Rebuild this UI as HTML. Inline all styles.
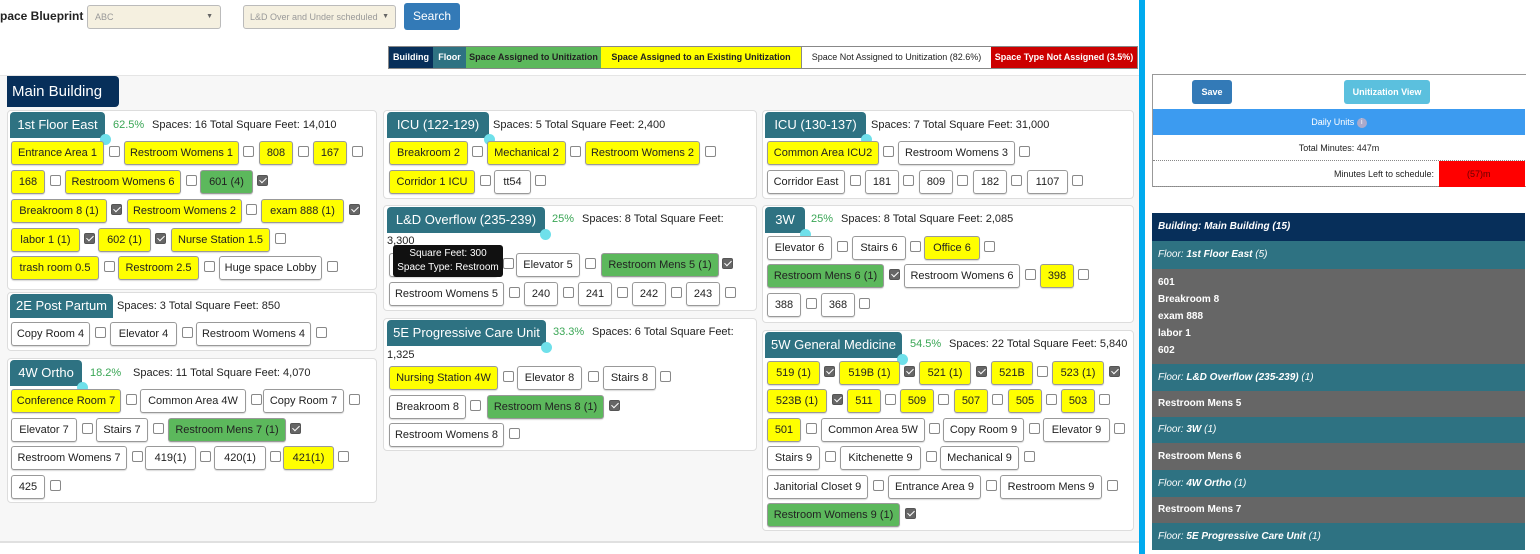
<!DOCTYPE html>
<html><head><meta charset="utf-8"><style>
*{box-sizing:border-box;margin:0;padding:0}
body{width:1540px;height:554px;background:#fff;position:relative;overflow:hidden;font-family:"Liberation Sans",sans-serif;font-size:11px;color:#222}
.a{position:absolute}
.p{position:absolute;background:#fff;border:1px solid #ddd;border-radius:4px}
.t{position:absolute;background:#2e7282;color:#fff;font-size:13px;border-radius:4px 4px 0 0;text-align:center;line-height:26px;height:26px;white-space:nowrap}
.t i{position:absolute;right:-6px;bottom:-7px;width:11px;height:11px;border-radius:50%;background:#6fe0ea}
.k{position:absolute;height:24px;line-height:22px;border:1px solid #999;border-radius:3px;text-align:center;white-space:nowrap;overflow:hidden;font-size:11px;background:#fff;box-shadow:0 1px 1px rgba(0,0,0,.15)}
.y{background:#ffff00}.g{background:#5cb85c}
.b{position:absolute;width:11px;height:11px;border:1px solid #888;border-radius:2px;background:#fff}
.bc{background:#666;border-color:#555}
.bc:after{content:"";position:absolute;left:3px;top:0;width:3px;height:6px;border:solid #fff;border-width:0 1.5px 1.5px 0;transform:rotate(45deg)}
.h{position:absolute;font-size:11px;white-space:nowrap}
.pc{color:#3aa655}
.r{position:absolute;left:1152px;width:373px;color:#fff;font-family:"Liberation Sans",sans-serif;font-size:10px;font-weight:bold;padding-left:6px}
.fl{background:#2e7282;font-style:italic;font-weight:normal}
.gr{background:#666}
.lg span{display:inline-block;text-align:center;height:21px}
</style></head><body>
<div class="a" style="left:0;top:9px;font-weight:bold;font-size:12px">pace Blueprint</div>
<div class="a" style="left:87px;top:5px;width:134px;height:24px;background:#f5f0e0;border:1px solid #bbb;border-radius:3px;color:#999;font-size:9px;line-height:22px;padding-left:7px">ABC<span style="position:absolute;right:7px;color:#666;font-size:7px">▼</span></div>
<div class="a" style="left:243px;top:5px;width:153px;height:24px;background:#f5f0e0;border:1px solid #bbb;border-radius:3px;color:#999;font-size:9px;line-height:22px;padding-left:6px">L&amp;D Over and Under scheduled<span style="position:absolute;right:6px;color:#666;font-size:7px">▼</span></div>
<div class="a" style="left:404px;top:3px;width:56px;height:27px;background:#337ab7;border-radius:3px;color:#fff;font-size:12px;line-height:27px;text-align:center">Search</div>
<div class="a lg" style="left:388px;top:46px;height:23px;display:flex;font-size:9px;font-weight:bold;line-height:21px;border:1px solid #888;white-space:nowrap">
<span style="background:#072f5a;color:#fff;width:44px">Building</span><span style="background:#2e7282;color:#fff;width:33px">Floor</span><span style="background:#5cb85c;width:135px">Space Assigned to Unitization</span><span style="background:#ff0;width:200px">Space Assigned to an Existing Unitization</span><span style="background:#fff;width:190px;font-weight:normal;border-left:1px solid #888">Space Not Assigned to Unitization (82.6%)</span><span style="background:#c00;color:#fff;width:146px">Space Type Not Assigned (3.5%)</span></div>
<div class="a" style="left:1139px;top:0;width:6px;height:554px;background:#00aaee"></div>
<div class="a" style="left:0;top:75px;width:1139px;height:468px;background:#f7f7f7;border-top:1px solid #e5e5e5;border-bottom:2px solid #e0e0e0"></div>
<div class="a" style="left:7px;top:76px;width:112px;height:31px;background:#072f5a;color:#fff;font-size:15px;line-height:31px;padding-left:5px;border-radius:0 4px 4px 0">Main Building</div>

<!-- left col -->
<div class="p" style="left:7px;top:110px;width:370px;height:180px"></div>
<div class="t" style="left:10px;top:112px;width:95px">1st Floor East<i></i></div>
<div class="h pc" style="left:113px;top:119px">62.5%</div><div class="h" style="left:152px;top:119px">Spaces: 16 Total Square Feet: 14,010</div>
<div class="k y" style="left:11px;top:141px;width:93px">Entrance Area 1</div><div class="b" style="left:109px;top:146px"></div>
<div class="k y" style="left:124px;top:141px;width:115px">Restroom Womens 1</div><div class="b" style="left:243px;top:146px"></div>
<div class="k y" style="left:259px;top:141px;width:34px">808</div><div class="b" style="left:298px;top:146px"></div>
<div class="k y" style="left:313px;top:141px;width:34px">167</div><div class="b" style="left:352px;top:146px"></div>
<div class="k y" style="left:11px;top:170px;width:34px">168</div><div class="b" style="left:50px;top:175px"></div>
<div class="k y" style="left:65px;top:170px;width:116px">Restroom Womens 6</div><div class="b" style="left:186px;top:175px"></div>
<div class="k g" style="left:200px;top:170px;width:53px">601 (4)</div><div class="b bc" style="left:257px;top:175px"></div>
<div class="k y" style="left:11px;top:199px;width:96px">Breakroom 8 (1)</div><div class="b bc" style="left:111px;top:204px"></div>
<div class="k y" style="left:127px;top:199px;width:115px">Restroom Womens 2</div><div class="b" style="left:246px;top:204px"></div>
<div class="k y" style="left:261px;top:199px;width:83px">exam 888 (1)</div><div class="b bc" style="left:349px;top:204px"></div>
<div class="k y" style="left:11px;top:228px;width:69px">labor 1 (1)</div><div class="b bc" style="left:84px;top:233px"></div>
<div class="k y" style="left:98px;top:228px;width:53px">602 (1)</div><div class="b bc" style="left:155px;top:233px"></div>
<div class="k y" style="left:171px;top:228px;width:99px">Nurse Station 1.5</div><div class="b" style="left:275px;top:233px"></div>
<div class="k y" style="left:11px;top:256px;width:88px">trash room 0.5</div><div class="b" style="left:104px;top:261px"></div>
<div class="k y" style="left:118px;top:256px;width:81px">Restroom 2.5</div><div class="b" style="left:204px;top:261px"></div>
<div class="k" style="left:219px;top:256px;width:103px">Huge space Lobby</div><div class="b" style="left:327px;top:261px"></div>

<div class="p" style="left:7px;top:292px;width:370px;height:59px"></div>
<div class="t" style="left:10px;top:294px;width:103px;height:24px;line-height:24px">2E Post Partum</div>
<div class="h" style="left:117px;top:300px">Spaces: 3 Total Square Feet: 850</div>
<div class="k" style="left:11px;top:322px;width:79px">Copy Room 4</div><div class="b" style="left:95px;top:327px"></div>
<div class="k" style="left:110px;top:322px;width:67px">Elevator 4</div><div class="b" style="left:182px;top:327px"></div>
<div class="k" style="left:196px;top:322px;width:115px">Restroom Womens 4</div><div class="b" style="left:316px;top:327px"></div>

<div class="p" style="left:7px;top:358px;width:370px;height:145px"></div>
<div class="t" style="left:10px;top:360px;width:72px">4W Ortho<i></i></div>
<div class="h pc" style="left:90px;top:367px">18.2%</div><div class="h" style="left:133px;top:367px">Spaces: 11 Total Square Feet: 4,070</div>
<div class="k y" style="left:11px;top:389px;width:110px">Conference Room 7</div><div class="b" style="left:126px;top:394px"></div>
<div class="k" style="left:140px;top:389px;width:106px">Common Area 4W</div><div class="b" style="left:251px;top:394px"></div>
<div class="k" style="left:263px;top:389px;width:81px">Copy Room 7</div><div class="b" style="left:349px;top:394px"></div>
<div class="k" style="left:11px;top:418px;width:66px">Elevator 7</div><div class="b" style="left:82px;top:423px"></div>
<div class="k" style="left:96px;top:418px;width:52px">Stairs 7</div><div class="b" style="left:153px;top:423px"></div>
<div class="k g" style="left:168px;top:418px;width:118px">Restroom Mens 7 (1)</div><div class="b bc" style="left:290px;top:423px"></div>
<div class="k" style="left:11px;top:446px;width:116px">Restroom Womens 7</div><div class="b" style="left:132px;top:451px"></div>
<div class="k" style="left:145px;top:446px;width:51px">419(1)</div><div class="b" style="left:200px;top:451px"></div>
<div class="k" style="left:214px;top:446px;width:52px">420(1)</div><div class="b" style="left:270px;top:451px"></div>
<div class="k y" style="left:283px;top:446px;width:51px">421(1)</div><div class="b" style="left:338px;top:451px"></div>
<div class="k" style="left:11px;top:475px;width:34px">425</div><div class="b" style="left:50px;top:480px"></div>

<!-- middle col -->
<div class="p" style="left:383px;top:110px;width:374px;height:89px"></div>
<div class="t" style="left:387px;top:112px;width:102px">ICU (122-129)<i></i></div>
<div class="h" style="left:493px;top:119px">Spaces: 5 Total Square Feet: 2,400</div>
<div class="k y" style="left:389px;top:141px;width:79px">Breakroom 2</div><div class="b" style="left:472px;top:146px"></div>
<div class="k y" style="left:487px;top:141px;width:79px">Mechanical 2</div><div class="b" style="left:570px;top:146px"></div>
<div class="k y" style="left:585px;top:141px;width:115px">Restroom Womens 2</div><div class="b" style="left:705px;top:146px"></div>
<div class="k y" style="left:389px;top:170px;width:86px">Corridor 1 ICU</div><div class="b" style="left:480px;top:175px"></div>
<div class="k" style="left:494px;top:170px;width:37px">tt54</div><div class="b" style="left:535px;top:175px"></div>

<div class="p" style="left:383px;top:205px;width:374px;height:106px"></div>
<div class="t" style="left:387px;top:207px;width:158px">L&amp;D Overflow (235-239)<i></i></div>
<div class="h pc" style="left:552px;top:213px">25%</div><div class="h" style="left:582px;top:213px">Spaces: 8 Total Square Feet:</div>
<div class="h" style="left:387px;top:235px">3,300</div>
<div class="k" style="left:389px;top:253px;width:109px">Restroom Mens 5</div><div class="b" style="left:503px;top:258px"></div>
<div class="k" style="left:516px;top:253px;width:64px">Elevator 5</div><div class="b" style="left:585px;top:258px"></div>
<div class="k g" style="left:601px;top:253px;width:118px">Restroom Mens 5 (1)</div><div class="b bc" style="left:722px;top:258px"></div>
<div class="k" style="left:389px;top:282px;width:115px">Restroom Womens 5</div><div class="b" style="left:509px;top:287px"></div>
<div class="k" style="left:524px;top:282px;width:34px">240</div><div class="b" style="left:563px;top:287px"></div>
<div class="k" style="left:578px;top:282px;width:34px">241</div><div class="b" style="left:617px;top:287px"></div>
<div class="k" style="left:632px;top:282px;width:34px">242</div><div class="b" style="left:671px;top:287px"></div>
<div class="k" style="left:686px;top:282px;width:34px">243</div><div class="b" style="left:725px;top:287px"></div>
<div class="a" style="left:393px;top:245px;width:110px;height:32px;background:#111;color:#fff;border-radius:3px;font-size:10px;line-height:14px;text-align:center;padding-top:2px">Square Feet: 300<br>Space Type: Restroom</div>

<div class="p" style="left:383px;top:318px;width:374px;height:133px"></div>
<div class="t" style="left:387px;top:320px;width:159px">5E Progressive Care Unit<i></i></div>
<div class="h pc" style="left:553px;top:326px">33.3%</div><div class="h" style="left:592px;top:326px">Spaces: 6 Total Square Feet:</div>
<div class="h" style="left:387px;top:349px">1,325</div>
<div class="k y" style="left:389px;top:366px;width:109px">Nursing Station 4W</div><div class="b" style="left:503px;top:371px"></div>
<div class="k" style="left:517px;top:366px;width:65px">Elevator 8</div><div class="b" style="left:588px;top:371px"></div>
<div class="k" style="left:603px;top:366px;width:53px">Stairs 8</div><div class="b" style="left:660px;top:371px"></div>
<div class="k" style="left:389px;top:395px;width:77px">Breakroom 8</div><div class="b" style="left:470px;top:400px"></div>
<div class="k g" style="left:487px;top:395px;width:117px">Restroom Mens 8 (1)</div><div class="b bc" style="left:609px;top:400px"></div>
<div class="k" style="left:389px;top:423px;width:115px">Restroom Womens 8</div><div class="b" style="left:509px;top:428px"></div>

<!-- right col -->
<div class="p" style="left:762px;top:110px;width:372px;height:89px"></div>
<div class="t" style="left:765px;top:112px;width:101px">ICU (130-137)<i></i></div>
<div class="h" style="left:871px;top:119px">Spaces: 7 Total Square Feet: 31,000</div>
<div class="k y" style="left:767px;top:141px;width:112px">Common Area ICU2</div><div class="b" style="left:883px;top:146px"></div>
<div class="k" style="left:898px;top:141px;width:117px">Restroom Womens 3</div><div class="b" style="left:1019px;top:146px"></div>
<div class="k" style="left:767px;top:170px;width:78px">Corridor East</div><div class="b" style="left:850px;top:175px"></div>
<div class="k" style="left:865px;top:170px;width:34px">181</div><div class="b" style="left:903px;top:175px"></div>
<div class="k" style="left:919px;top:170px;width:34px">809</div><div class="b" style="left:957px;top:175px"></div>
<div class="k" style="left:973px;top:170px;width:34px">182</div><div class="b" style="left:1011px;top:175px"></div>
<div class="k" style="left:1027px;top:170px;width:41px">1107</div><div class="b" style="left:1072px;top:175px"></div>

<div class="p" style="left:762px;top:205px;width:372px;height:118px"></div>
<div class="t" style="left:765px;top:207px;width:40px">3W<i></i></div>
<div class="h pc" style="left:811px;top:213px">25%</div><div class="h" style="left:841px;top:213px">Spaces: 8 Total Square Feet: 2,085</div>
<div class="k" style="left:767px;top:236px;width:65px">Elevator 6</div><div class="b" style="left:837px;top:241px"></div>
<div class="k" style="left:852px;top:236px;width:54px">Stairs 6</div><div class="b" style="left:910px;top:241px"></div>
<div class="k y" style="left:924px;top:236px;width:56px">Office 6</div><div class="b" style="left:984px;top:241px"></div>
<div class="k g" style="left:767px;top:264px;width:117px">Restroom Mens 6 (1)</div><div class="b bc" style="left:889px;top:269px"></div>
<div class="k" style="left:904px;top:264px;width:116px">Restroom Womens 6</div><div class="b" style="left:1025px;top:269px"></div>
<div class="k y" style="left:1040px;top:264px;width:34px">398</div><div class="b" style="left:1078px;top:269px"></div>
<div class="k" style="left:767px;top:293px;width:34px">388</div><div class="b" style="left:806px;top:298px"></div>
<div class="k" style="left:821px;top:293px;width:34px">368</div><div class="b" style="left:859px;top:298px"></div>

<div class="p" style="left:762px;top:330px;width:372px;height:201px"></div>
<div class="t" style="left:765px;top:332px;width:137px">5W General Medicine<i></i></div>
<div class="h pc" style="left:910px;top:338px">54.5%</div><div class="h" style="left:949px;top:338px">Spaces: 22 Total Square Feet: 5,840</div>
<div class="k y" style="left:767px;top:361px;width:53px">519 (1)</div><div class="b bc" style="left:824px;top:366px"></div>
<div class="k y" style="left:839px;top:361px;width:61px">519B (1)</div><div class="b bc" style="left:904px;top:366px"></div>
<div class="k y" style="left:919px;top:361px;width:52px">521 (1)</div><div class="b bc" style="left:976px;top:366px"></div>
<div class="k y" style="left:991px;top:361px;width:42px">521B</div><div class="b" style="left:1037px;top:366px"></div>
<div class="k y" style="left:1052px;top:361px;width:52px">523 (1)</div><div class="b bc" style="left:1109px;top:366px"></div>
<div class="k y" style="left:767px;top:389px;width:60px">523B (1)</div><div class="b bc" style="left:832px;top:394px"></div>
<div class="k y" style="left:847px;top:389px;width:34px">511</div><div class="b" style="left:885px;top:394px"></div>
<div class="k y" style="left:900px;top:389px;width:34px">509</div><div class="b" style="left:938px;top:394px"></div>
<div class="k y" style="left:954px;top:389px;width:34px">507</div><div class="b" style="left:992px;top:394px"></div>
<div class="k y" style="left:1008px;top:389px;width:34px">505</div><div class="b" style="left:1046px;top:394px"></div>
<div class="k y" style="left:1061px;top:389px;width:34px">503</div><div class="b" style="left:1099px;top:394px"></div>
<div class="k y" style="left:767px;top:418px;width:34px">501</div><div class="b" style="left:806px;top:423px"></div>
<div class="k" style="left:821px;top:418px;width:104px">Common Area 5W</div><div class="b" style="left:929px;top:423px"></div>
<div class="k" style="left:943px;top:418px;width:81px">Copy Room 9</div><div class="b" style="left:1029px;top:423px"></div>
<div class="k" style="left:1043px;top:418px;width:67px">Elevator 9</div><div class="b" style="left:1114px;top:423px"></div>
<div class="k" style="left:767px;top:446px;width:53px">Stairs 9</div><div class="b" style="left:825px;top:451px"></div>
<div class="k" style="left:840px;top:446px;width:81px">Kitchenette 9</div><div class="b" style="left:926px;top:451px"></div>
<div class="k" style="left:940px;top:446px;width:79px">Mechanical 9</div><div class="b" style="left:1024px;top:451px"></div>
<div class="k" style="left:767px;top:475px;width:101px">Janitorial Closet 9</div><div class="b" style="left:873px;top:480px"></div>
<div class="k" style="left:888px;top:475px;width:93px">Entrance Area 9</div><div class="b" style="left:986px;top:480px"></div>
<div class="k" style="left:1000px;top:475px;width:102px">Restroom Mens 9</div><div class="b" style="left:1107px;top:480px"></div>
<div class="k g" style="left:767px;top:503px;width:133px">Restroom Womens 9 (1)</div><div class="b bc" style="left:905px;top:508px"></div>

<!-- right panel -->
<div class="a" style="left:1152px;top:74px;width:374px;height:113px;border:1px solid #999;border-right:none"></div>
<div class="a" style="left:1192px;top:80px;width:40px;height:24px;background:#337ab7;border-radius:3px;color:#fff;font-size:9px;font-weight:bold;text-align:center;line-height:24px">Save</div>
<div class="a" style="left:1344px;top:80px;width:86px;height:24px;background:#5bc0de;border-radius:3px;color:#fff;font-size:9px;font-weight:bold;text-align:center;line-height:24px">Unitization View</div>
<div class="a" style="left:1153px;top:109px;width:372px;height:26px;background:#3c9bf0;color:#fff;font-size:9px;text-align:center;line-height:26px">Daily Units <span style="display:inline-block;width:10px;height:10px;border-radius:50%;background:#aac;vertical-align:middle;font-size:7px;line-height:10px">i</span></div>
<div class="a" style="left:1153px;top:135px;width:372px;height:26px;border-bottom:1px dotted #888;font-size:9px;text-align:center;line-height:26px">Total Minutes: 447m</div>
<div class="a" style="left:1153px;top:161px;width:286px;height:26px;font-size:9px;text-align:right;line-height:26px;padding-right:5px;border-bottom:1px dotted #888">Minutes Left to schedule:</div>
<div class="a" style="left:1439px;top:161px;width:86px;height:26px;background:#f00;color:#600;font-size:9px;line-height:26px;padding-left:28px">(57)m</div>
<div class="r" style="top:213px;height:28px;line-height:28px;background:#072f5a;font-style:italic">Building: Main Building (15)</div>
<div class="r fl" style="top:241px;height:28px;line-height:28px">Floor: <b>1st Floor East</b> (5)</div>
<div class="r gr" style="top:269px;height:95px;line-height:17px;padding-top:5px">601<br>Breakroom 8<br>exam 888<br>labor 1<br>602</div>
<div class="r fl" style="top:364px;height:27px;line-height:27px">Floor: <b>L&amp;D Overflow (235-239)</b> (1)</div>
<div class="r gr" style="top:391px;height:26px;line-height:26px">Restroom Mens 5</div>
<div class="r fl" style="top:417px;height:26px;line-height:26px">Floor: <b>3W</b> (1)</div>
<div class="r gr" style="top:443px;height:27px;line-height:27px">Restroom Mens 6</div>
<div class="r fl" style="top:470px;height:27px;line-height:27px">Floor: <b>4W Ortho</b> (1)</div>
<div class="r gr" style="top:497px;height:26px;line-height:26px">Restroom Mens 7</div>
<div class="r fl" style="top:523px;height:27px;line-height:27px">Floor: <b>5E Progressive Care Unit</b> (1)</div>
</body></html>
